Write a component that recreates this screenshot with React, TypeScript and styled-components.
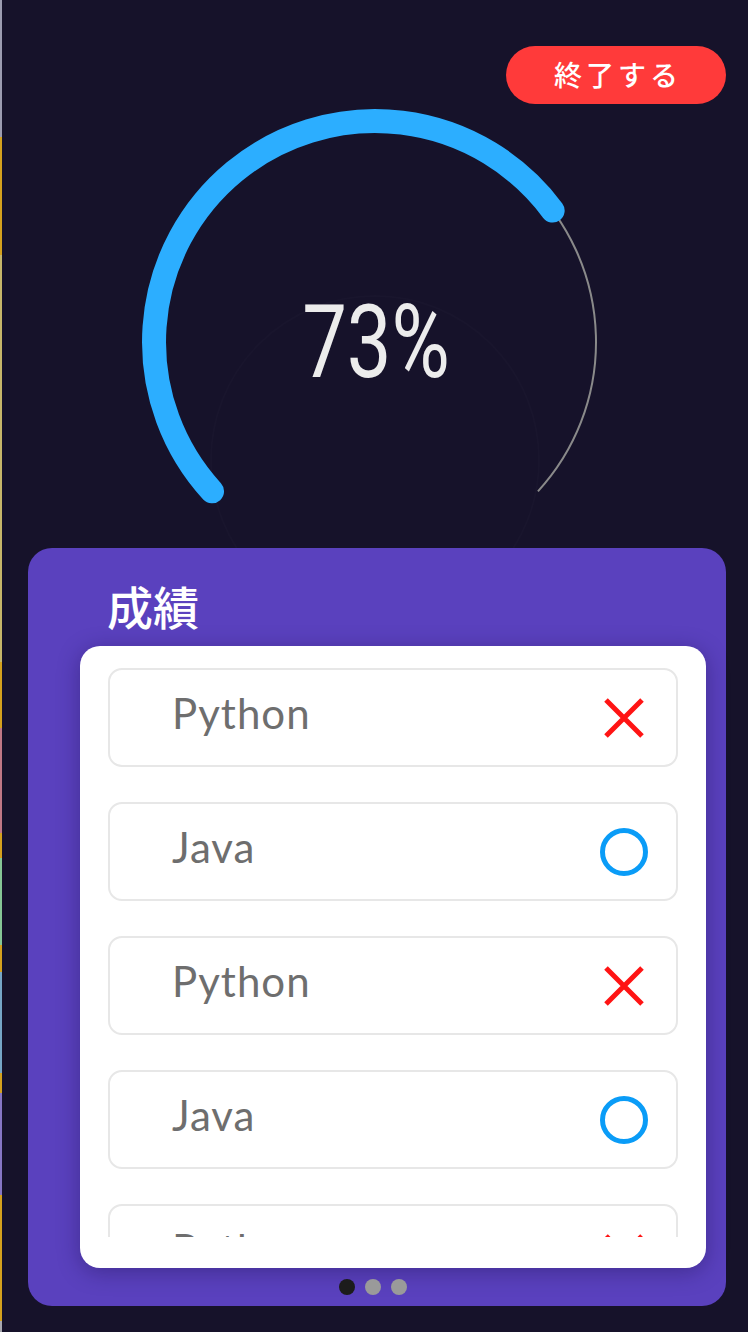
import React from "react";
import styled, { createGlobalStyle } from "styled-components";

const GlobalStyle = createGlobalStyle`
  html, body {
    margin: 0;
    padding: 0;
    background: #16122a;
  }
  * { box-sizing: border-box; }
`;

const Page = styled.div`
  display: flex;
  width: 748px;
  height: 1332px;
  overflow: hidden;
  background: #16122a;
`;

const Strip = styled.div`
  display: flex;
  flex-direction: column;
  width: 2px;
  flex: none;
`;

const StripSegment = styled.div<{ $h: number; $c: string }>`
  height: ${(p) => p.$h}px;
  background: ${(p) => p.$c};
  flex: none;
`;

const Main = styled.div`
  flex: 1;
  display: flex;
  flex-direction: column;
  padding-top: 46px;
`;

const TopBar = styled.div`
  display: flex;
  justify-content: flex-end;
  padding-right: 22px;
`;

const EndButton = styled.button`
  width: 220px;
  height: 58px;
  border: none;
  border-radius: 29px;
  background: #ff3a3a;
  color: #ffffff;
  font-family: "Noto Sans CJK JP", "Noto Sans", sans-serif;
  font-size: 28px;
  font-weight: 500;
  letter-spacing: 4px;
  padding: 0 0 2px 4px;
  cursor: pointer;
`;

const GaugeBox = styled.div`
  position: relative;
  width: 480px;
  height: 444px;
  margin: 0 auto;
`;

const GaugeLabel = styled.div`
  position: absolute;
  left: 241px;
  top: 238px;
  transform: translate(-50%, -50%) scaleX(0.78);
  font-family: Roboto, "Liberation Sans", sans-serif;
  font-weight: 400;
  font-size: 102px;
  line-height: 1;
  color: #ececec;
  white-space: nowrap;
`;

const Card = styled.section`
  margin: 0 22px 0 26px;
  height: 758px;
  border-radius: 24px;
  background: #5a41be;
  display: flex;
  flex-direction: column;
`;

const TitleRow = styled.div`
  height: 98px;
  padding: 16px 0 0 79px;
  display: flex;
  align-items: center;
`;

const Title = styled.h2`
  margin: 0;
  font-family: "Noto Sans CJK JP", "Noto Sans", sans-serif;
  font-size: 46px;
  font-weight: 500;
  line-height: 1;
  color: #ffffff;
`;

const Panel = styled.div`
  margin: 0 20px 0 52px;
  height: 622px;
  background: #ffffff;
  border-radius: 20px;
  padding: 22px 28px 31px;
  box-shadow: 0 4px 22px rgba(20, 10, 60, 0.35);
`;

const ListViewport = styled.div`
  height: 569px;
  overflow: hidden;
  display: flex;
  flex-direction: column;
  gap: 35px;
`;

const Item = styled.div`
  flex: none;
  height: 99px;
  border: 2px solid #e7e7e7;
  border-radius: 14px;
  display: flex;
  align-items: center;
  justify-content: space-between;
  padding: 0 28px 0 62px;
`;

const ItemName = styled.span`
  font-family: Lato, "Noto Sans", sans-serif;
  font-size: 42px;
  letter-spacing: 1px;
  color: #6e6e6e;
  margin-bottom: 9px;
`;

const MarkBox = styled.div`
  width: 48px;
  height: 48px;
  display: flex;
  align-items: center;
  justify-content: center;
`;

const Dots = styled.div`
  flex: 1;
  display: flex;
  justify-content: center;
  align-items: center;
  gap: 10px;
  padding: 0 8px 0 0;
`;

const Dot = styled.span<{ $active?: boolean }>`
  width: 16px;
  height: 16px;
  border-radius: 50%;
  background: ${(p) => (p.$active ? "#1c1c1c" : "#9a9a9a")};
`;

const segments: [number, string][] = [
  [137, "#9c9cb0"],
  [118, "#d4a11e"],
  [407, "#c6b66a"],
  [66, "#d4a11e"],
  [105, "#c07886"],
  [25, "#d4a11e"],
  [87, "#86c696"],
  [27, "#d4a11e"],
  [101, "#76a6c6"],
  [20, "#d4a11e"],
  [102, "#8676c4"],
  [126, "#d4a11e"],
  [11, "#a8a8b0"],
];

const CX = 240;
const CY = 238;
const R = 221;

function polar(deg: number, r = R): [number, number] {
  const a = (deg * Math.PI) / 180;
  return [CX + r * Math.cos(a), CY + r * Math.sin(a)];
}

function arc(a1: number, a2: number, r = R): string {
  const [x1, y1] = polar(a1, r);
  const [x2, y2] = polar(a2, r);
  const large = a2 - a1 > 180 ? 1 : 0;
  return `M ${x1.toFixed(2)} ${y1.toFixed(2)} A ${r} ${r} 0 ${large} 1 ${x2.toFixed(2)} ${y2.toFixed(2)}`;
}

const START = 137.5;
const END = 402.5;
const VALUE_END = 323.5;

function Gauge() {
  return (
    <GaugeBox>
      <svg width="480" height="444" viewBox="0 0 480 444">
        <circle cx={240} cy={356} r={164} fill="none" stroke="rgba(255,255,255,0.015)" strokeWidth={2} />
        <path d={arc(START, END)} fill="none" stroke="#8a8a8a" strokeWidth={2} />
        <path d={arc(START, VALUE_END)} fill="none" stroke="#2caeff" strokeWidth={24} strokeLinecap="round" />
      </svg>
      <GaugeLabel>73%</GaugeLabel>
    </GaugeBox>
  );
}

function WrongMark() {
  return (
    <svg width="40" height="40" viewBox="0 0 40 40">
      <path d="M2 2 L38 38 M38 2 L2 38" stroke="#ff1414" strokeWidth={5} />
    </svg>
  );
}

function RightMark() {
  return (
    <svg width="48" height="48" viewBox="0 0 48 48">
      <circle cx={24} cy={24} r={21.5} fill="none" stroke="#0a9cf7" strokeWidth={5} />
    </svg>
  );
}

const results = [
  { name: "Python", ok: false },
  { name: "Java", ok: true },
  { name: "Python", ok: false },
  { name: "Java", ok: true },
  { name: "Python", ok: false },
];

export default function App() {
  return (
    <>
      <GlobalStyle />
      <Page>
        <Strip>
          {segments.map(([h, c], i) => (
            <StripSegment key={i} $h={h} $c={c} />
          ))}
        </Strip>
        <Main>
          <TopBar>
            <EndButton>終了する</EndButton>
          </TopBar>
          <Gauge />
          <Card>
            <TitleRow>
              <Title>成績</Title>
            </TitleRow>
            <Panel>
              <ListViewport>
                {results.map((r, i) => (
                  <Item key={i}>
                    <ItemName>{r.name}</ItemName>
                    <MarkBox>{r.ok ? <RightMark /> : <WrongMark />}</MarkBox>
                  </Item>
                ))}
              </ListViewport>
            </Panel>
            <Dots>
              <Dot $active />
              <Dot />
              <Dot />
            </Dots>
          </Card>
        </Main>
      </Page>
    </>
  );
}
